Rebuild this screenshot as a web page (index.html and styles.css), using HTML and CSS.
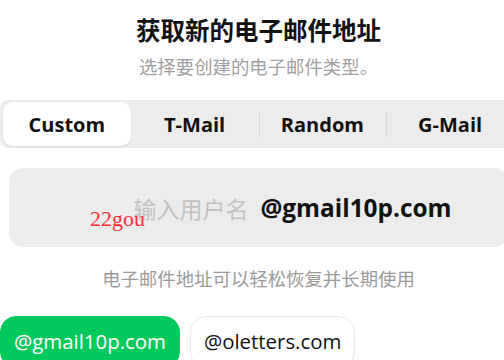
FILE: index.html
```html
<!DOCTYPE html>
<html lang="zh-CN">
<head>
<meta charset="UTF-8">
<meta name="viewport" content="width=device-width, initial-scale=1.0">
<link rel="stylesheet" href="styles.css">
<title>获取新的电子邮件地址</title>
</head>
<body>
  <div id="panel">
    <h1 class="title">获取新的电子邮件地址</h1>
    <p class="subtitle">选择要创建的电子邮件类型。</p>

    <div class="tabs">
      <button class="tab active">Custom</button>
      <button class="tab">T-Mail</button>
      <button class="tab sep">Random</button>
      <button class="tab sep">G-Mail</button>
    </div>

    <div class="address">
      <span class="placeholder">输入用户名</span>
      <span class="domain">@gmail10p.com</span>
      <span class="mark">22gou</span>
    </div>

    <p class="hint">电子邮件地址可以轻松恢复并长期使用</p>

    <div class="domains">
      <span class="chip selected">@gmail10p.com</span>
      <span class="chip">@oletters.com</span>
    </div>
  </div>
</body>
</html>
```

FILE: styles.css
```css
html, body {
  margin: 0;
  padding: 0;
  overflow: hidden;
  background-color: #fff;
}

body {
  font-family: "Open Sans", "Noto Sans CJK SC", sans-serif;
  color: #111;
}

#panel {
  width: 517px;
}

.title {
  margin: 13px 0 0;
  font-family: "Noto Sans CJK SC", sans-serif;
  font-size: 24.5px;
  font-weight: bold;
  line-height: 34px;
  text-align: center;
  color: #111;
}

.subtitle {
  margin: 6px 0 0;
  font-family: "Noto Sans CJK SC", sans-serif;
  font-size: 18.4px;
  line-height: 26px;
  text-align: center;
  color: #a0a0a0;
}

.tabs {
  margin-top: 21px;
  display: grid;
  grid-template-columns: repeat(4, 1fr);
  padding: 2px 3px;
  background-color: #ececec;
  border-radius: 8px;
}

.tab {
  position: relative;
  height: 44px;
  border: none;
  background: none;
  font-family: "Open Sans", sans-serif;
  font-size: 20px;
  font-weight: bold;
  color: #111;
  border-radius: 10px;
}

.tab.active {
  background-color: #fff;
  box-shadow: 0 1px 3px rgba(0, 0, 0, 0.08);
}

.tab.sep::before {
  content: "";
  position: absolute;
  left: 0;
  top: 10px;
  height: 25px;
  border-left: 1px solid #d6d6d6;
}

.address {
  position: relative;
  margin: 20px 9px 0;
  padding-left: 68px;
  height: 79px;
  background-color: #ececec;
  border-radius: 14px;
  display: flex;
  align-items: center;
  justify-content: center;
  gap: 12px;
}

.placeholder {
  font-family: "Noto Sans CJK SC", sans-serif;
  font-size: 23px;
  color: #c2c2c2;
}

.domain {
  font-size: 24.4px;
  font-weight: bold;
  color: #111;
}

.mark {
  position: absolute;
  left: 81px;
  top: 38px;
  font-family: "Liberation Serif", serif;
  font-size: 22px;
  color: #ff2d3a;
}

.hint {
  margin: 18px 0 0;
  font-family: "Noto Sans CJK SC", sans-serif;
  font-size: 18.4px;
  line-height: 26px;
  text-align: center;
  color: #9a9a9a;
}

.domains {
  margin-top: 25px;
  display: flex;
  gap: 10px;
}

.chip {
  padding: 0 13px;
  height: 50px;
  line-height: 48px;
  border: 1px solid #e8e8e8;
  border-radius: 16px;
  font-size: 20.4px;
  font-weight: 500;
  color: #111;
  background-color: #fff;
}

.chip.selected {
  background-color: #02c95c;
  border-color: #02c95c;
  color: #fff;
}
```
